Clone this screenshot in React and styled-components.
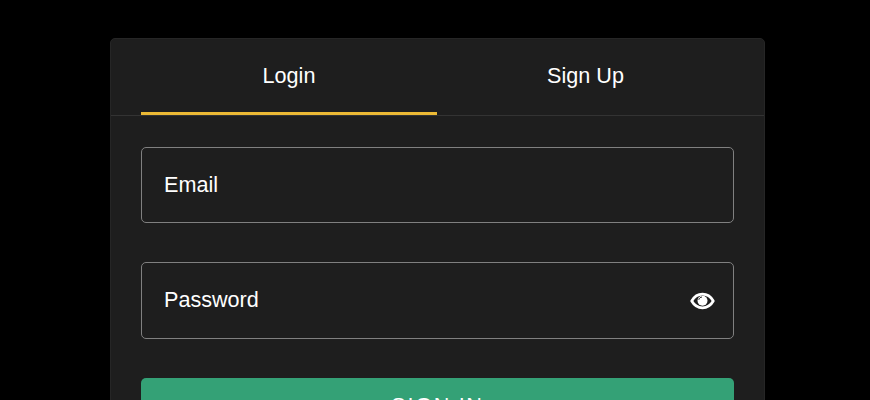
import React from "react";
import styled, { createGlobalStyle } from "styled-components";

const Global = createGlobalStyle`
  html, body { margin: 0; padding: 0; background: #000; height: 100%; overflow: hidden; }
  body { font-family: "Liberation Sans", Arial, sans-serif; }
`;

const Page = styled.main`
  display: flex;
  justify-content: center;
  padding: 38px 105px 0 110px;
  background: #000;
  min-height: 400px;
  box-sizing: border-box;
`;

const Card = styled.section`
  width: 655px;
  box-sizing: border-box;
  background: #1e1e1e;
  border: 1px solid #262626;
  border-radius: 5px;
  padding-bottom: 30px;
`;

const TabBar = styled.nav`
  display: flex;
  padding: 0 30px;
  border-bottom: 1px solid #333;
`;

const Tab = styled.button`
  flex: 0 0 ${(p) => p.$w}px;
  height: 76px;
  background: none;
  border: none;
  border-bottom: 3px solid ${(p) => (p.$active ? "#ebb935" : "transparent")};
  color: #fff;
  font: 21.6px "Liberation Sans", Arial, sans-serif;
  padding: 0;
`;

const Form = styled.form`
  display: flex;
  flex-direction: column;
  gap: 39px;
  padding: 31px 30px 0;
`;

const Field = styled.label`
  display: flex;
  align-items: center;
  justify-content: space-between;
  height: ${(p) => p.$h}px;
  box-sizing: border-box;
  padding: 0 18px ${(p) => p.$nudge}px 22px;
  border: 1px solid #808080;
  border-radius: 5px;
  color: #fff;
  font-size: 21.6px;
`;

const EyeIcon = styled.svg`
  width: 25px;
  height: 18px;
  margin-top: 2px;
  flex: none;
`;

const Submit = styled.button`
  height: 56px;
  background: #34a176;
  border: none;
  border-radius: 5px;
  color: #fff;
  font: 21.6px "Liberation Sans", Arial, sans-serif;
  letter-spacing: 1.7px;
  text-transform: uppercase;
`;

function Eye() {
  return (
    <EyeIcon viewBox="0 0 25 18" aria-hidden="true">
      <path
        d="M1.7 9C4.300 4.500 8 2.200 12.500 2.200S20.700 4.500 23.300 9C20.700 13.500 17 15.800 12.500 15.800S4.300 13.500 1.700 9Z"
        fill="none"
        stroke="#fff"
        strokeWidth="2.700"
        strokeLinejoin="round"
      />
      <circle cx="12.500" cy="8.800" r="5" fill="#fff" />
      <path d="M8.800 7.800C9.200 6.200 10.400 5.100 12 5" fill="none" stroke="#1e1e1e" strokeWidth="1" />
    </EyeIcon>
  );
}

export default function App() {
  return (
    <Page>
      <Global />
      <Card>
        <TabBar>
          <Tab $active $w={296}>Login</Tab>
          <Tab $w={297}>Sign Up</Tab>
        </TabBar>
        <Form>
          <Field $h={76} $nudge={0}>Email</Field>
          <Field $h={77} $nudge={2}>Password<Eye /></Field>
          <Submit type="button">Sign In</Submit>
        </Form>
      </Card>
    </Page>
  );
}
